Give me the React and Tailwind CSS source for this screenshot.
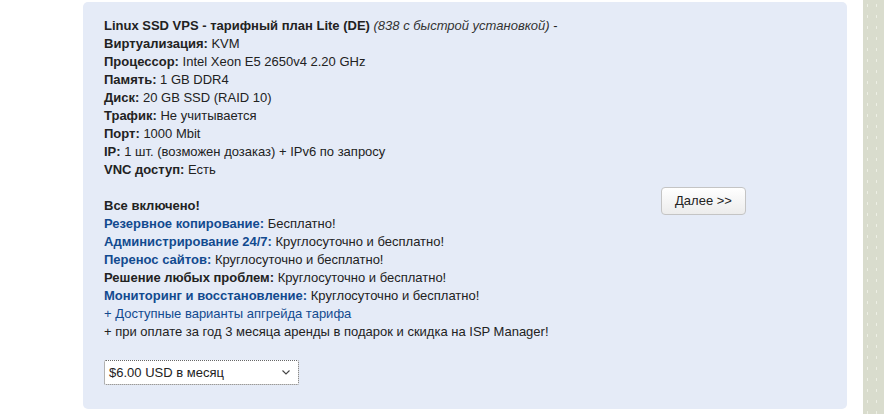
const specs = [
  ['Виртуализация:', 'KVM'],
  ['Процессор:', 'Intel Xeon E5 2650v4 2.20 GHz'],
  ['Память:', '1 GB DDR4'],
  ['Диск:', '20 GB SSD (RAID 10)'],
  ['Трафик:', 'Не учитывается'],
  ['Порт:', '1000 Mbit'],
  ['IP:', '1 шт. (возможен дозаказ) + IPv6 по запросу'],
  ['VNC доступ:', 'Есть'],
]

const extras = [
  ['Резервное копирование:', 'Бесплатно!', true],
  ['Администрирование 24/7:', 'Круглосуточно и бесплатно!', true],
  ['Перенос сайтов:', 'Круглосуточно и бесплатно!', true],
  ['Решение любых проблем:', 'Круглосуточно и бесплатно!', false],
  ['Мониторинг и восстановление:', 'Круглосуточно и бесплатно!', true],
]

export default function App() {
  return (
    <div
      className="flex h-[414px] w-[884px] overflow-hidden bg-white text-[13px] leading-[18px] text-[#222]"
      style={{ fontFamily: '"Liberation Sans", Arial, sans-serif' }}
    >
      <div className="w-[83px] shrink-0" />
      <div className="mt-[2px] flex h-[407px] w-[764px] shrink-0 items-start rounded-[5px] bg-[#e5ebf7] pl-[21px] pt-[15px]">
        <div className="w-[541px]">
          <div>
            <b>Linux SSD VPS - тарифный план Lite (DE)</b>{' '}
            <i className="text-[#333]">(838 с быстрой установкой)</i> -
          </div>
          {specs.map(([k, v]) => (
            <div key={k}>
              <b>{k}</b> {v}
            </div>
          ))}
          <div className="h-[18px]" />
          <div>
            <b>Все включено!</b>
          </div>
          {extras.map(([k, v, blue]) => (
            <div key={k}>
              <b className={blue ? 'text-[#124a8f]' : ''}>{k}</b> {v}
            </div>
          ))}
          <div className="text-[#124a8f]">+ Доступные варианты апгрейда тарифа</div>
          <div>+ при оплате за год 3 месяца аренды в подарок и скидка на ISP Manager!</div>
          <div className="mt-[19px] flex h-[25px] w-[195px] items-center justify-between rounded-[2px] border border-dotted border-[#666] bg-white pl-[4px] pr-[8px] text-[13px]">
            <span>$6.00 USD в месяц</span>
            <svg width="8" height="5" viewBox="0 0 8 5" fill="none">
              <path d="M0.5 0.5 L4 4 L7.5 0.5" stroke="#444" strokeWidth="1.1" />
            </svg>
          </div>
        </div>
        <div className="ml-[16px] mt-[170px]">
          <button className="h-[28px] w-[85px] rounded-[4px] border border-[#c4c4c4] bg-gradient-to-b from-white to-[#ececec] text-[13px] text-[#222]">
            Далее &gt;&gt;
          </button>
        </div>
      </div>
      <div className="ml-[16px] h-full flex-1 bg-[#d9dccd] bg-[radial-gradient(#eef0e6_0.8px,transparent_1px)] bg-[length:9px_11px]" />
    </div>
  )
}
